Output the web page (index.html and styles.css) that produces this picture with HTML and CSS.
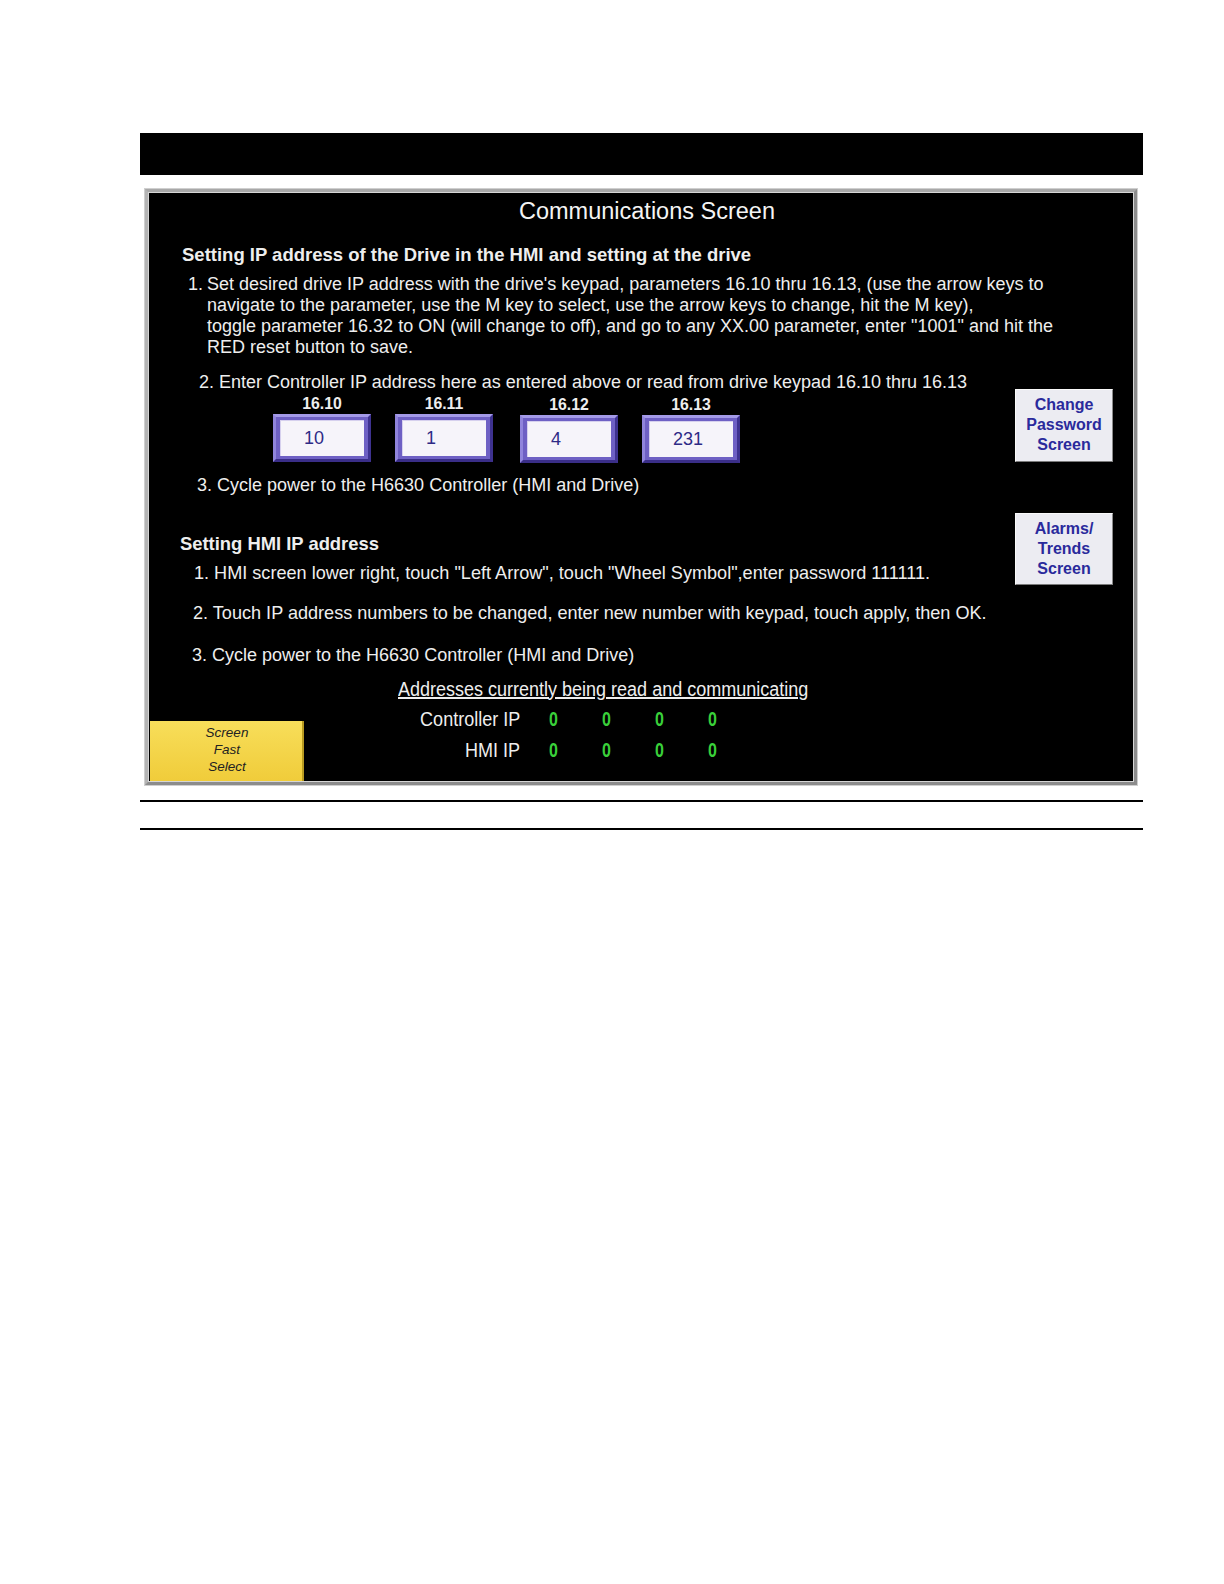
FILE: index.html
```html
<!DOCTYPE html>
<html>
<head>
<meta charset="utf-8">
<link rel="stylesheet" href="styles.css">
</head>
<body>
<div class="page">
  <div class="topbar"></div>
  <div class="screen">
    <div class="title">Communications Screen</div>
    <div class="h1">Setting IP address of the Drive in the HMI and setting at the drive</div>
    <div class="item1">
      <span class="num">1.</span>
      <span class="txt">Set desired drive IP address with the drive's keypad, parameters 16.10 thru 16.13, (use the arrow keys to<br>navigate to the parameter, use the M key to select, use the arrow keys to change, hit the M key),<br>toggle parameter 16.32 to ON (will change to off), and go to any XX.00 parameter, enter "1001" and hit the<br>RED reset button to save.</span>
    </div>
    <div class="row">
      <div class="left">
        <div class="item2">2. Enter Controller IP address here as entered above or read from drive keypad 16.10 thru 16.13</div>
        <div class="boxes">
          <div class="field"><div class="lbl">16.10</div><div class="box"><span>10</span></div></div>
          <div class="field"><div class="lbl">16.11</div><div class="box"><span>1</span></div></div>
          <div class="field f3"><div class="lbl">16.12</div><div class="box"><span>4</span></div></div>
          <div class="field f4"><div class="lbl">16.13</div><div class="box"><span>231</span></div></div>
        </div>
        <div class="item3">3. Cycle power to the H6630 Controller (HMI and Drive)</div>
      </div>
      <div class="btn b1">Change<br>Password<br>Screen</div>
    </div>
    <div class="row row2">
      <div class="left">
        <div class="h2">Setting HMI IP address</div>
        <div class="hitem a">1. HMI screen lower right, touch "Left Arrow", touch "Wheel Symbol",enter password 111111.</div>
        <div class="hitem b">2. Touch IP address numbers to be changed, enter new number with keypad, touch apply, then OK.</div>
        <div class="hitem c">3. Cycle power to the H6630 Controller (HMI and Drive)</div>
      </div>
      <div class="btn b2">Alarms/<br>Trends<br>Screen</div>
    </div>
    <div class="bottom">
      <div class="fast">Screen<br>Fast<br>Select</div>
      <div class="addr">
        <div class="addr-h"><span class="narrow">Addresses currently being read and communicating</span></div>
        <div class="addr-row"><span class="addr-l"><span class="narrow nr">Controller IP</span></span><span class="z">0</span><span class="z">0</span><span class="z">0</span><span class="z">0</span></div>
        <div class="addr-row r2"><span class="addr-l"><span class="narrow nr">HMI IP</span></span><span class="z">0</span><span class="z">0</span><span class="z">0</span><span class="z">0</span></div>
      </div>
    </div>
  </div>
  <div class="rule r-a"></div>
  <div class="rule r-b"></div>
</div>
</body>
</html>
```
FILE: styles.css
```css
html, body { margin: 0; padding: 0; background: #fff; }
body { font-family: "Liberation Sans", Arial, sans-serif; }
.page { padding-top: 133px; padding-bottom: 40px; }
.topbar { margin-left: 140px; width: 1003px; height: 42px; background: #000; }
.screen {
  margin-left: 145px; margin-top: 14px;
  width: 992px; height: 596px; box-sizing: border-box;
  background: #000; color: #eeeeee;
  border: 3px solid #8c8c8c;
  border-top-color: #a8a8a8; border-left-color: #b4b4b4;
  box-shadow: inset 0 0 0 1px #d6d6d6, 0 0 0 1px #cfcfcf;
  display: flex; flex-direction: column;
}
.title { text-align: center; font-size: 23.5px; padding-left: 12px; margin-top: 5px; line-height: 28px; color: #f4f4f4; }
.h1 { font-weight: bold; font-size: 18.5px; margin-top: 20px; margin-left: 34px; line-height: 20px; }
.item1 { display: flex; margin-top: 9px; margin-left: 40px; font-size: 18px; line-height: 21px; }
.item1 .num { width: 19px; flex: none; }
.row { display: flex; justify-content: space-between; }
.left { flex: 1; }
.item2 { font-size: 18px; margin-left: 51px; margin-top: 14px; line-height: 20px; }
.boxes { display: flex; margin-left: 125px; margin-top: 3px; }
.field { width: 98px; margin-right: 24px; display: flex; flex-direction: column; align-items: center; }
.field.f3 { margin-right: 24px; margin-left: 3px; }
.field.f3, .field.f4 { padding-top: 1px; }
.lbl { font-weight: bold; font-size: 15.8px; line-height: 18px; height: 18px; }
.box {
  width: 98px; height: 48px; box-sizing: border-box; margin-top: 1px;
  background: #6e60c4;
  border: 3px solid; border-color: #a49ae8 #3e3290 #3a2e88 #9084dc;
  padding: 3px 4px;
}
.box span {
  display: block; height: 100%; background: #f6f4fa; color: #2e2a86;
  font-size: 18px; line-height: 36px; padding-left: 24px;
  box-shadow: inset 1px 1px 0 #d6d0ee;
}
.item3 { font-size: 18px; margin-left: 49px; margin-top: 12px; line-height: 20px; }
.btn {
  width: 98px; height: 73px; box-sizing: border-box; flex: none;
  background: #ececf2; color: #2a2a9c;
  font-weight: bold; font-size: 16px; line-height: 20px; text-align: center;
  border: 1px solid #fafafa; border-right-color: #8a8a8a; border-bottom-color: #7a7a7a;
  padding-top: 5px; margin-right: 21px;
}
.b1 { margin-top: 31px; }
.b2 { margin-top: 18px; height: 72px; }
.h2 { font-weight: bold; font-size: 18.4px; margin-left: 32px; margin-top: 39px; line-height: 20px; }
.hitem { font-size: 18.1px; margin-left: 46px; line-height: 20px; }
.hitem.a { margin-top: 9px; }
.hitem.b { margin-top: 20px; margin-left: 45px; }
.hitem.c { margin-top: 22px; font-size: 18px; margin-left: 44px; }
.bottom { display: flex; margin-top: auto; }
.fast {
  width: 154px; height: 60px; box-sizing: border-box; margin-left: 2px; margin-bottom: 1px; align-self: flex-end;
  background: linear-gradient(#f8de5a, #f0cc3a);
  border-right: 2px solid #b89a20;
  color: #222; font-style: italic; font-size: 13.5px; line-height: 17px; text-align: center;
  padding-top: 3px; padding-left: 2px;
}
.addr { margin-left: 94px; padding-bottom: 22px; }
.narrow { display: inline-block; transform: scaleX(0.9); transform-origin: left center; white-space: nowrap; }
.nr { transform-origin: right center; }
.addr-h { font-size: 20px; line-height: 20px; width: 414px; }
.addr-h .narrow { text-decoration: underline; }
.addr-row { display: flex; align-items: baseline; margin-top: 10px; line-height: 20px; font-size: 20px; }
.addr-row.r2 { margin-top: 11px; }
.addr-l { width: 122px; text-align: right; margin-right: 29px; }
.z { color: #3ad03a; font-weight: bold; width: 53px; font-size: 20px; display: inline-block; transform: scaleX(0.8); transform-origin: left center; }
.rule { margin-left: 140px; width: 1003px; height: 2px; background: #000; }
.r-a { margin-top: 15px; }
.r-b { margin-top: 26px; }
```
